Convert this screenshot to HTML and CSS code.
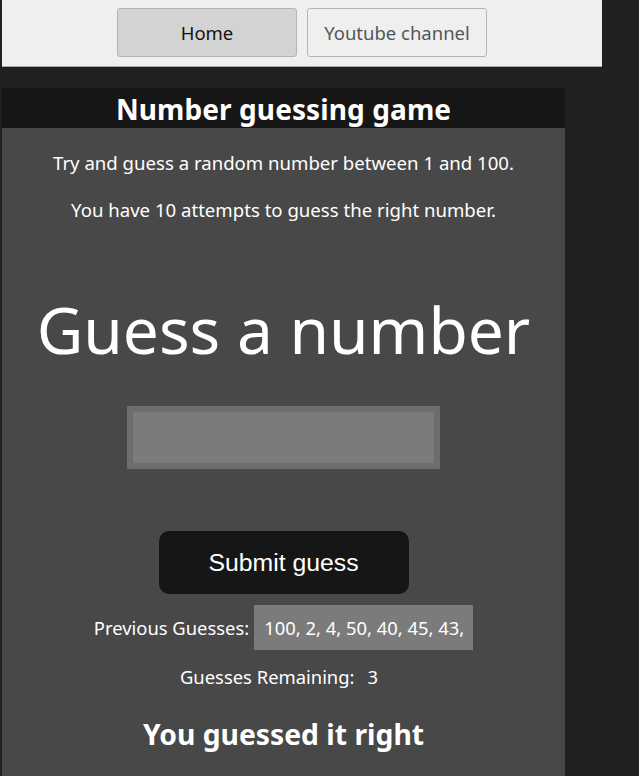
FILE: index.html
```html
<!DOCTYPE html>
<html>
<head>
<meta charset="utf-8">
<link rel="stylesheet" href="styles.css">
</head>
<body>
<div class="page">
  <nav class="nav">
    <button class="nav-btn nav-btn-active">Home</button>
    <button class="nav-btn">Youtube channel</button>
  </nav>
  <main class="game">
    <h1 class="game-title">Number guessing game</h1>
    <section class="panel">
      <p class="intro intro-first">Try and guess a random number between 1 and 100.</p>
      <p class="intro">You have 10 attempts to guess the right number.</p>
      <h2 class="prompt">Guess a number</h2>
      <input class="guess-input" type="text">
      <button class="submit">Submit guess</button>
      <div class="row row-prev">
        <span class="label">Previous Guesses:</span>
        <span class="guesses">100, 2, 4, 50, 40, 45, 43,</span>
      </div>
      <div class="row row-remaining">
        <span class="label">Guesses Remaining:</span>
        <span class="remaining">3</span>
      </div>
      <h3 class="result">You guessed it right</h3>
    </section>
  </main>
</div>
</body>
</html>
```
FILE: styles.css
```css
html, body {
  margin: 0;
  padding: 0;
  height: 100%;
}
body {
  background: #202020;
  font-family: "Noto Sans", "Open Sans", sans-serif;
  overflow: hidden;
}
.page {
  border-left: 2px solid #1d2027;
  min-height: 100%;
  box-sizing: border-box;
}
.nav {
  width: 600px;
  height: 67px;
  background: #efefef;
  border-bottom: 1px solid #a8a8a8;
  box-sizing: border-box;
  display: flex;
  justify-content: center;
  align-items: flex-start;
  gap: 10px;
  padding-top: 8px;
}
.nav-btn {
  width: 180px;
  height: 49px;
  background: #efefef;
  border: 1px solid #b4b4b4;
  border-radius: 3px;
  font-family: "Noto Sans", sans-serif;
  font-size: 18.5px;
  color: #555;
  padding: 0 0 0 0;
  line-height: 47px;
}
.nav-btn-active {
  background: #d3d3d3;
  color: #111;
}
.game {
  width: 563px;
  margin-top: 21px;
}
.game-title {
  margin: 0;
  height: 40px;
  line-height: 42px;
  background: #161616;
  color: #fff;
  text-align: center;
  font-size: 28px;
  font-weight: 700;
  letter-spacing: 0.1px;
}
.panel {
  background: #484848;
  color: #fff;
  text-align: center;
  display: flex;
  flex-direction: column;
  align-items: center;
  min-height: 648px;
}
.intro {
  margin: 0;
  font-size: 18.6px;
  line-height: 24px;
}
.intro-first {
  margin-top: 23px;
}
.intro + .intro {
  margin-top: 23px;
}
.prompt {
  margin: 63px 0 0;
  font-size: 64px;
  font-weight: 400;
  line-height: 90px;
}
.guess-input {
  margin-top: 31px;
  width: 313px;
  height: 63px;
  box-sizing: border-box;
  border: 6px solid #6c6e6e;
  background: #7b7b7b;
  outline: none;
}
.submit {
  margin-top: 62px;
  width: 250px;
  height: 63px;
  background: #161616;
  color: #fff;
  border: none;
  border-radius: 10px;
  font-family: "Liberation Sans", Arial, sans-serif;
  font-size: 24.8px;
  padding: 0;
}
.row {
  display: flex;
  align-items: center;
  font-size: 18.4px;
}
.row-prev {
  margin-top: 11px;
  height: 45px;
  gap: 5px;
}
.guesses {
  background: #7b7b7b;
  height: 45px;
  line-height: 45px;
  padding: 0 9px 0 10px;
}
.row-remaining {
  margin-top: 14px;
  height: 24px;
  gap: 13px;
  padding-right: 9px;
}
.result {
  margin: 27px 0 0;
  font-size: 28.3px;
  font-weight: 700;
}
```
